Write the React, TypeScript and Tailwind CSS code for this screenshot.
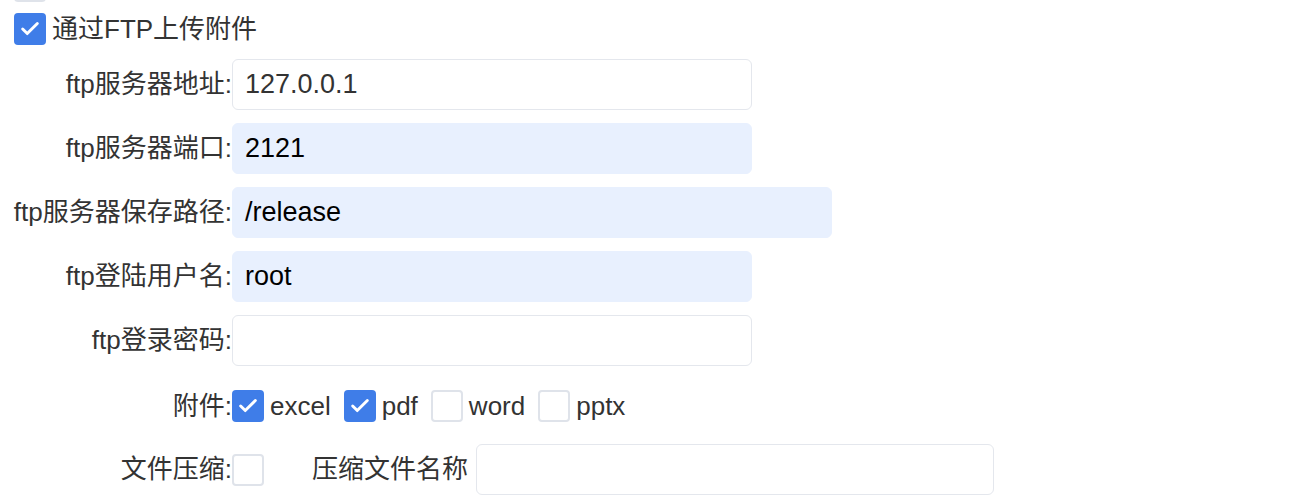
import { Check } from "lucide-react";

type Field = {
  label: string;
  value: string;
  width: string;
  filled: boolean;
};

const fields: Field[] = [
  { label: "ftp服务器地址:", value: "127.0.0.1", width: "w-[520px]", filled: false },
  { label: "ftp服务器端口:", value: "2121", width: "w-[520px]", filled: true },
  { label: "ftp服务器保存路径:", value: "/release", width: "w-[600px]", filled: true },
  { label: "ftp登陆用户名:", value: "root", width: "w-[520px]", filled: true },
  { label: "ftp登录密码:", value: "", width: "w-[520px]", filled: false },
];

const attachments = [
  { name: "excel", checked: true },
  { name: "pdf", checked: true },
  { name: "word", checked: false },
  { name: "pptx", checked: false },
];

function Box({ checked }: { checked: boolean }) {
  return checked ? (
    <span className="flex h-8 w-8 shrink-0 items-center justify-center rounded-[4px] bg-[#3f7de8]">
      <Check className="h-[22px] w-[22px] text-white" strokeWidth={3.2} />
    </span>
  ) : (
    <span className="block h-8 w-8 shrink-0 rounded-[4px] border-2 border-[#dfe3ea] bg-white" />
  );
}

function Label({ children }: { children: string }) {
  return (
    <span className="flex w-[218px] shrink-0 justify-end whitespace-nowrap">
      <span>{children}</span>
    </span>
  );
}

export default function App() {
  return (
    <div
      className="h-[501px] w-[1292px] overflow-hidden bg-white pl-[14px] text-[26px] text-[#333]"
      style={{ fontFamily: '"Liberation Sans", "Noto Sans CJK SC", sans-serif' }}
    >
      <div className="-mt-[30px]">
        <Box checked={false} />
      </div>

      <label className="mt-[11px] flex h-8 items-center gap-[6px]">
        <Box checked={true} />
        <span>通过FTP上传附件</span>
      </label>

      <div className="mt-[14px] flex flex-col gap-[13px]">
        {fields.map((f) => (
          <div key={f.label} className="flex h-[51px] items-center">
            <Label>{f.label}</Label>
            <div
              className={`flex h-[51px] items-center rounded-[6px] border px-3 text-[27px] ${f.width} ${
                f.filled
                  ? "border-[#e8f0fe] bg-[#e8f0fe] text-black"
                  : "border-[#e4e7ed] bg-white"
              }`}
            >
              {f.value}
            </div>
          </div>
        ))}
      </div>

      <div className="mt-[24px] flex h-8 items-center">
        <Label>附件:</Label>
        <div className="flex items-center gap-[13px]">
          {attachments.map((a) => (
            <label key={a.name} className="flex items-center gap-[6px]">
              <Box checked={a.checked} />
              <span>{a.name}</span>
            </label>
          ))}
        </div>
      </div>

      <div className="mt-[22px] flex h-[51px] items-center">
        <Label>文件压缩:</Label>
        <Box checked={false} />
        <span className="ml-[48px]">压缩文件名称</span>
        <div className="ml-[8px] h-[51px] w-[518px] rounded-[6px] border border-[#e4e7ed] bg-white" />
      </div>
    </div>
  );
}
